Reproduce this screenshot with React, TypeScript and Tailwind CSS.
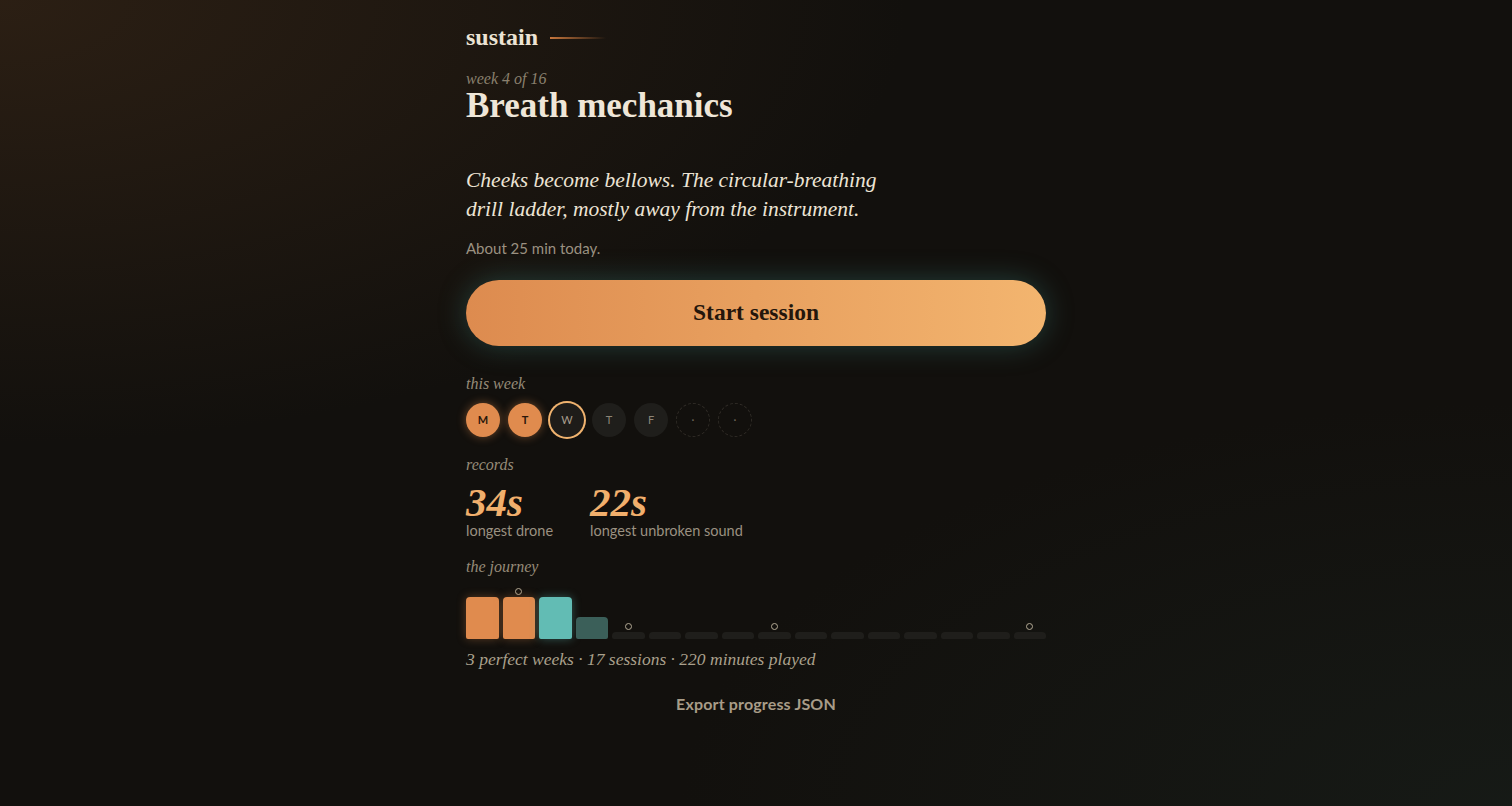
// Sustain — weekly practice home: lesson header, start button, week dots, records and journey bars.
const serif = "font-['Liberation_Serif',_'DejaVu_Serif',_serif]";
const sans = "font-['Lato',_'Noto_Sans',_sans-serif]";

type Day = { label: string; state: 'done' | 'today' | 'open' | 'rest' };

const days: Day[] = [
  { label: 'M', state: 'done' },
  { label: 'T', state: 'done' },
  { label: 'W', state: 'today' },
  { label: 'T', state: 'open' },
  { label: 'F', state: 'open' },
  { label: '·', state: 'rest' },
  { label: '·', state: 'rest' },
];

type Week = { h: number; kind: 'perfect' | 'current' | 'partial' | 'future'; mark?: boolean };

const weeks: Week[] = [
  { h: 42, kind: 'perfect' },
  { h: 42, kind: 'perfect', mark: true },
  { h: 42, kind: 'current' },
  { h: 22, kind: 'partial' },
  { h: 7, kind: 'future', mark: true },
  { h: 7, kind: 'future' },
  { h: 7, kind: 'future' },
  { h: 7, kind: 'future' },
  { h: 7, kind: 'future', mark: true },
  { h: 7, kind: 'future' },
  { h: 7, kind: 'future' },
  { h: 7, kind: 'future' },
  { h: 7, kind: 'future' },
  { h: 7, kind: 'future' },
  { h: 7, kind: 'future' },
  { h: 7, kind: 'future', mark: true },
];

const barClass: Record<Week['kind'], string> = {
  perfect: 'bg-[#e08b4e] shadow-[0_0_10px_rgba(224,139,78,0.35)]',
  current: 'bg-[#62bcb4] shadow-[0_0_10px_rgba(98,188,180,0.4)]',
  partial: 'bg-[#3b5f59]',
  future: 'bg-[#1f1e1b]',
};

function DayDot({ d }: { d: Day }) {
  if (d.state === 'done')
    return (
      <div className={`flex h-[34px] w-[34px] items-center justify-center rounded-full bg-[#e08b4e] text-[11px] font-bold text-[#2a170b] shadow-[0_0_10px_rgba(224,139,78,0.45)] ${sans}`}>
        {d.label}
      </div>
    );
  if (d.state === 'today')
    return (
      <div className={`flex h-[34px] w-[34px] items-center justify-center rounded-full bg-[#1e1c19] text-[11px] text-[#a89e8c] ring-2 ring-[#f0b36f] ${sans}`}>
        {d.label}
      </div>
    );
  if (d.state === 'open')
    return (
      <div className={`flex h-[34px] w-[34px] items-center justify-center rounded-full bg-[#1f1e1b] text-[11px] text-[#8c8476] ${sans}`}>
        {d.label}
      </div>
    );
  return (
    <div className={`flex h-[34px] w-[34px] items-center justify-center rounded-full border border-dashed border-[#2f2b26] text-[11px] text-[#6e665a] ${sans}`}>
      {d.label}
    </div>
  );
}

function Label({ children }: { children: React.ReactNode }) {
  return <div className={`text-[16px] italic leading-5 text-[#968b78] ${serif}`}>{children}</div>;
}

export default function App() {
  return (
    <div className="min-h-screen w-full bg-[#12100d] bg-[radial-gradient(ellipse_60%_55%_at_0%_0%,rgba(52,36,22,0.75),transparent_100%),radial-gradient(ellipse_55%_50%_at_100%_100%,rgba(24,30,26,0.7),transparent_100%)]">
      <main className="mx-auto flex w-[580px] flex-col pt-[23px] pb-[80px]">
        {/* brand */}
        <div className="flex items-center gap-[12px]">
          <span className={`text-[24px] font-bold leading-7 text-[#ece3d4] ${serif}`}>sustain</span>
          <span className="mt-[1px] h-[2px] w-[56px] bg-[linear-gradient(to_right,#c7763c,rgba(199,118,60,0))]" />
        </div>

        {/* lesson */}
        <div className={`mt-[18px] text-[16px] italic leading-5 text-[#8a806e] ${serif}`}>week 4 of 16</div>
        <h1 className={`mt-0 text-[35px] font-bold leading-[34px] text-[#efe6d8] ${serif}`}>Breath mechanics</h1>

        <p className={`mt-[43px] w-[440px] text-[21.5px] italic leading-[29px] text-[#ede4d5] ${serif}`}>
          Cheeks become bellows. The circular-breathing drill ladder, mostly away from the instrument.
        </p>
        <p className={`mt-[14px] text-[15px] leading-5 text-[#9b9181] ${sans}`}>About 25 min today.</p>

        <button
          className={`mt-[22px] h-[66px] w-full rounded-full bg-[linear-gradient(to_right,#dd8b4f,#f3b56f)] text-[23.5px] font-bold text-[#24160c] shadow-[0_0_28px_rgba(70,150,140,0.35)] ${serif}`}
        >
          Start session
        </button>

        {/* this week */}
        <div className="mt-[28px]">
          <Label>this week</Label>
          <div className="mt-[9px] flex gap-[8px]">
            {days.map((d, i) => (
              <DayDot key={i} d={d} />
            ))}
          </div>
        </div>

        {/* records */}
        <div className="mt-[18px]">
          <Label>records</Label>
          <div className="mt-[8px] flex gap-[37px]">
            <div className="flex flex-col">
              <span className={`text-[41px] font-bold italic leading-[38px] text-[#f1af6c] ${serif}`}>34s</span>
              <span className={`text-[14.5px] leading-5 text-[#9b9181] ${sans}`}>longest drone</span>
            </div>
            <div className="flex flex-col">
              <span className={`text-[41px] font-bold italic leading-[38px] text-[#f1af6c] ${serif}`}>22s</span>
              <span className={`text-[14.5px] leading-5 text-[#9b9181] ${sans}`}>longest unbroken sound</span>
            </div>
          </div>
        </div>

        {/* journey */}
        <div className="mt-[16px]">
          <Label>the journey</Label>
          <div className="flex h-[62px] items-end gap-[4px]">
            {weeks.map((w, i) => (
              <div key={i} className="flex flex-1 flex-col items-center">
                {w.mark && <span className="mb-[2px] h-[7px] w-[7px] rounded-full border border-[#b3a994]" />}
                <div className={`w-full rounded-t-[4px] rounded-b-[2px] ${barClass[w.kind]}`} style={{ height: w.h }} />
              </div>
            ))}
          </div>
          <div className={`mt-[8px] text-[17.5px] italic leading-6 text-[#aaa08c] ${serif}`}>
            3 perfect weeks · 17 sessions · 220 minutes played
          </div>
        </div>

        <button className={`mx-auto mt-[21px] text-[16px] font-bold tracking-[0.01em] text-[#a89c88] ${sans}`}>Export progress JSON</button>
      </main>
    </div>
  );
}
